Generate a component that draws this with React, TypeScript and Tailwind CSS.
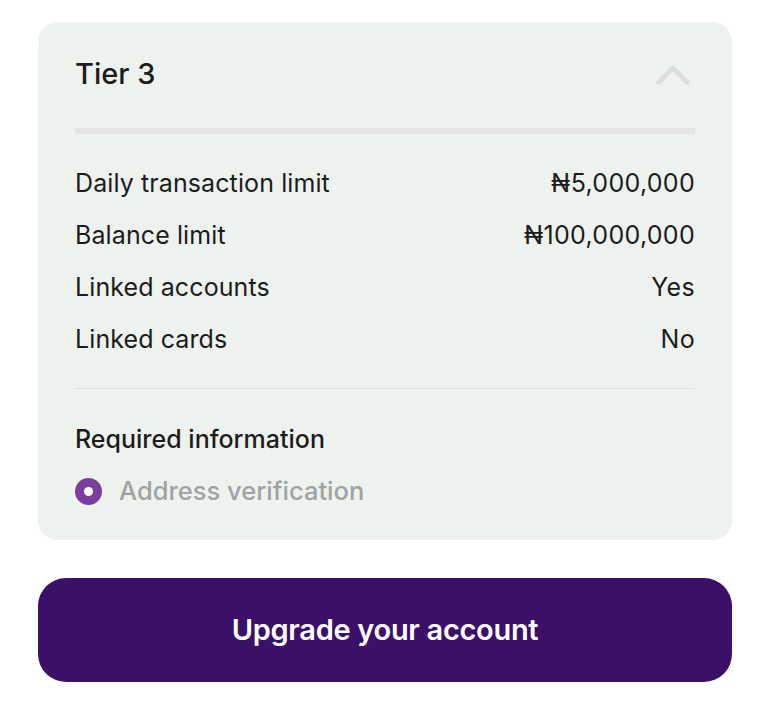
import React from 'react';

const rows: { label: string; value: string }[] = [
  { label: 'Daily transaction limit', value: '₦5,000,000' },
  { label: 'Balance limit', value: '₦100,000,000' },
  { label: 'Linked accounts', value: 'Yes' },
  { label: 'Linked cards', value: 'No' },
];

export default function App() {
  return (
    <div className="min-h-screen bg-white px-[38px] pt-[22px] font-['Inter',sans-serif] text-[#1c1c1c]">
      <div className="rounded-[20px] bg-[#eef2ef] px-[37px] pt-[34px] pb-[33px]">
        <div className="flex items-center justify-between">
          <h2 className="text-[29px] leading-[36px] font-medium">Tier 3</h2>
          <svg width="34" height="22" viewBox="0 0 34 22" fill="none" className="mr-[5px]">
            <path d="M3 19 L17 5 L31 19" stroke="#dcdcdc" strokeWidth="5" strokeLinecap="round" strokeLinejoin="round" />
          </svg>
        </div>

        <div className="mt-[36px] h-[6px] bg-[#e4e4e4]" />

        <div className="mt-[33px] flex flex-col gap-[20px]">
          {rows.map((r) => (
            <div key={r.label} className="flex items-center justify-between text-[25px] leading-[32px]">
              <span className="tracking-[0.1px]">{r.label}</span>
              <span className="tracking-[0.3px]">{r.value}</span>
            </div>
          ))}
        </div>

        <div className="mt-[33px] h-px bg-[#dde1de]" />

        <div className="mt-[34px] text-[25px] leading-[32px] font-medium">Required information</div>
        <div className="mt-[20px] flex items-center gap-[17px]">
          <span className="flex h-[27px] w-[27px] items-center justify-center rounded-full bg-[#7a3e9d]">
            <span className="h-[9px] w-[9px] rounded-full bg-white" />
          </span>
          <span className="text-[25.5px] leading-[32px] font-medium text-[#a0a3a1]">Address verification</span>
        </div>
      </div>

      <button className="mt-[38px] flex h-[104px] w-full items-center justify-center rounded-[28px] bg-[#3b1068] text-[29px] font-semibold tracking-[-0.3px] text-white">
        Upgrade your account
      </button>
    </div>
  );
}
